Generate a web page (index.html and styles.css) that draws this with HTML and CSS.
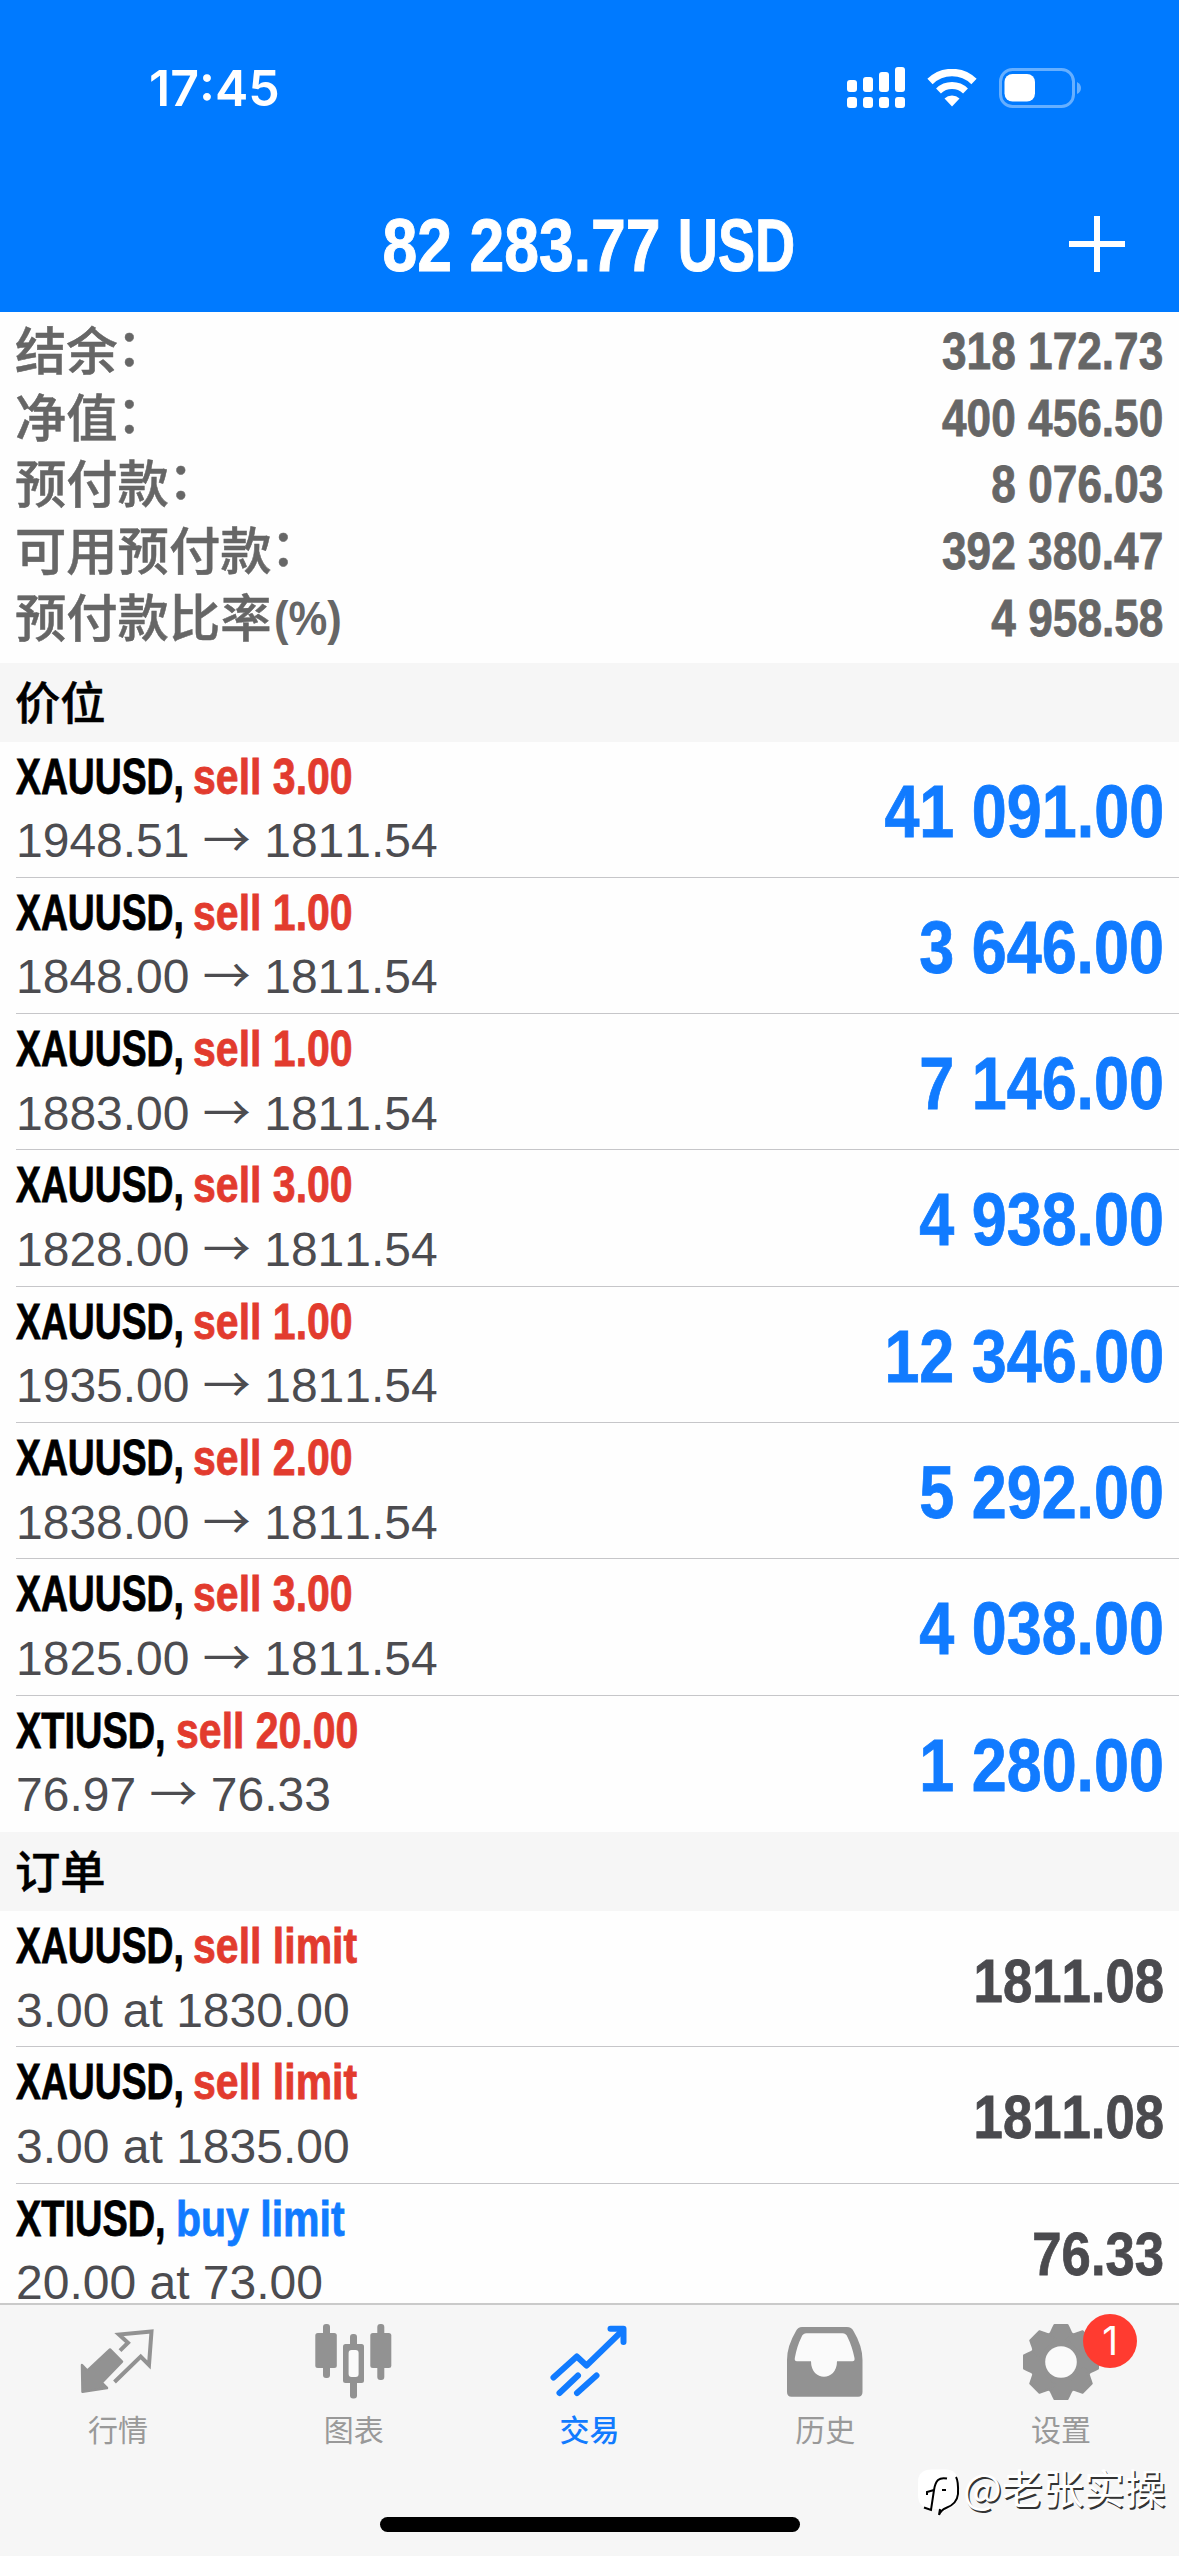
FILE: index.html
```html
<!DOCTYPE html>
<html lang="zh-CN">
<head>
    <meta charset="UTF-8">
    <meta name="viewport" content="width=device-width, initial-scale=1.0">
    <title>交易</title>
    <link rel="stylesheet" href="styles.css">
</head>
<body>
    <header>
        <div class="status-bar">
            <span class="time">17:45</span>
            <div class="status-icons">
                <svg class="signal" width="58" height="42" viewBox="0 0 58 42" fill="#fff">
                    <rect x="0" y="13" width="10" height="12" rx="3"/>
                    <rect x="16" y="10" width="10" height="15" rx="3"/>
                    <rect x="32" y="5" width="10" height="20" rx="3"/>
                    <rect x="48" y="0" width="10" height="25" rx="3"/>
                    <rect x="0" y="30" width="10" height="11" rx="3"/>
                    <rect x="16" y="30" width="10" height="11" rx="3"/>
                    <rect x="32" y="30" width="10" height="11" rx="3"/>
                    <rect x="48" y="30" width="10" height="11" rx="3"/>
                </svg>
                <svg class="wifi" width="50" height="38" viewBox="0 0 50 38">
                    <path d="M3 12.5A31.500 31.500 0 0 1 47 12.500" fill="none" stroke="#fff" stroke-width="7.500"/>
                    <path d="M11.500 22A19.500 19.500 0 0 1 38.500 22" fill="none" stroke="#fff" stroke-width="7"/>
                    <path d="M17.500 29.500A11 11 0 0 1 32.500 29.500L25 37.500Z" fill="#fff"/>
                </svg>
                <svg class="battery" width="83" height="40" viewBox="0 0 83 40">
                    <rect x="1.500" y="1.500" width="73" height="37" rx="12" fill="none" stroke="#66afff" stroke-width="3"/>
                    <rect x="5.500" y="6" width="30.500" height="27.500" rx="8" fill="#fff"/>
                    <path d="M78 14Q82 16 82 20Q82 24 78 26Z" fill="#66afff"/>
                </svg>
            </div>
        </div>
        <div class="nav-bar">
            <h1>82 283.77 <span>USD</span></h1>
            <svg class="add" width="56" height="56" viewBox="0 0 56 56">
                <path d="M28 0V56M0 28H56" stroke="#fff" stroke-width="6"/>
            </svg>
        </div>
    </header>

    <main>
        <div class="summary">
            <div class="summary-row"><span class="label">结余<i>：</i></span><span class="amount">318 172.73</span></div>
            <div class="summary-row"><span class="label">净值<i>：</i></span><span class="amount">400 456.50</span></div>
            <div class="summary-row"><span class="label">预付款<i>：</i></span><span class="amount">8 076.03</span></div>
            <div class="summary-row"><span class="label">可用预付款<i>：</i></span><span class="amount">392 380.47</span></div>
            <div class="summary-row"><span class="label">预付款比率<b>(%)</b></span><span class="amount">4 958.58</span></div>
        </div>

        <h2>价位</h2>
        <ul class="positions">
            <li>
                <div class="info">
                    <p class="name"><b>XAUUSD,</b> <span class="sell">sell 3.00</span></p>
                    <p class="detail">1948.51 <span class="arrow">→</span> 1811.54</p>
                </div>
                <span class="profit">41 091.00</span>
            </li>
            <li>
                <div class="info">
                    <p class="name"><b>XAUUSD,</b> <span class="sell">sell 1.00</span></p>
                    <p class="detail">1848.00 <span class="arrow">→</span> 1811.54</p>
                </div>
                <span class="profit">3 646.00</span>
            </li>
            <li>
                <div class="info">
                    <p class="name"><b>XAUUSD,</b> <span class="sell">sell 1.00</span></p>
                    <p class="detail">1883.00 <span class="arrow">→</span> 1811.54</p>
                </div>
                <span class="profit">7 146.00</span>
            </li>
            <li>
                <div class="info">
                    <p class="name"><b>XAUUSD,</b> <span class="sell">sell 3.00</span></p>
                    <p class="detail">1828.00 <span class="arrow">→</span> 1811.54</p>
                </div>
                <span class="profit">4 938.00</span>
            </li>
            <li>
                <div class="info">
                    <p class="name"><b>XAUUSD,</b> <span class="sell">sell 1.00</span></p>
                    <p class="detail">1935.00 <span class="arrow">→</span> 1811.54</p>
                </div>
                <span class="profit">12 346.00</span>
            </li>
            <li>
                <div class="info">
                    <p class="name"><b>XAUUSD,</b> <span class="sell">sell 2.00</span></p>
                    <p class="detail">1838.00 <span class="arrow">→</span> 1811.54</p>
                </div>
                <span class="profit">5 292.00</span>
            </li>
            <li>
                <div class="info">
                    <p class="name"><b>XAUUSD,</b> <span class="sell">sell 3.00</span></p>
                    <p class="detail">1825.00 <span class="arrow">→</span> 1811.54</p>
                </div>
                <span class="profit">4 038.00</span>
            </li>
            <li>
                <div class="info">
                    <p class="name oil"><b>XTIUSD,</b> <span class="sell">sell 20.00</span></p>
                    <p class="detail">76.97 <span class="arrow">→</span> 76.33</p>
                </div>
                <span class="profit">1 280.00</span>
            </li>
        </ul>

        <h2>订单</h2>
        <ul class="orders">
            <li>
                <div class="info">
                    <p class="name"><b>XAUUSD,</b> <span class="sell">sell limit</span></p>
                    <p class="detail">3.00 at 1830.00</p>
                </div>
                <span class="price">1811.08</span>
            </li>
            <li>
                <div class="info">
                    <p class="name"><b>XAUUSD,</b> <span class="sell">sell limit</span></p>
                    <p class="detail">3.00 at 1835.00</p>
                </div>
                <span class="price">1811.08</span>
            </li>
            <li>
                <div class="info">
                    <p class="name oil"><b>XTIUSD,</b> <span class="buy">buy limit</span></p>
                    <p class="detail">20.00 at 73.00</p>
                </div>
                <span class="price">76.33</span>
            </li>
        </ul>
    </main>

    <footer>
        <nav>
            <a class="tab">
                <svg width="80" height="80" viewBox="0 0 80 80">
                    <path d="M4 43L9.300 48.700L32 27.500L44 39.700L23.700 60.700L29 66L4.500 69.700Z" fill="#929292" stroke="#929292" stroke-width="2.500" stroke-linejoin="round"/>
                    <path d="M42 28.700L50 20.700L41 12.500L73.500 9.500L71 43L62.700 34.500L36.500 60" fill="none" stroke="#929292" stroke-width="4"/>
                </svg>
                <span>行情</span>
            </a>
            <a class="tab">
                <svg width="80" height="80" viewBox="0 0 80 80" fill="#929292">
                    <rect x="9" y="2" width="7" height="54" rx="3"/>
                    <rect x="1.300" y="11" width="21.500" height="35" rx="2.500"/>
                    <rect x="36" y="12" width="7" height="64.500" rx="3"/>
                    <rect x="29" y="22" width="21" height="39" rx="2.500"/>
                    <rect x="34.600" y="28" width="10" height="27" rx="3" fill="#fafafa"/>
                    <rect x="63.300" y="2" width="7" height="56" rx="3"/>
                    <rect x="56.300" y="11" width="21" height="35" rx="2.500"/>
                </svg>
                <span>图表</span>
            </a>
            <a class="tab active">
                <svg width="80" height="80" viewBox="0 0 80 80" fill="none" stroke="#117bff" stroke-width="6" stroke-linecap="round" stroke-linejoin="round">
                    <path d="M4.500 55.500L27.800 34.500L37.500 43.500L73 9"/>
                    <path d="M61.500 6.700H74.500V20"/>
                    <path d="M66 7H74V15Z" fill="#117bff" stroke="none"/>
                    <path d="M10.500 71L29 53.500M28 71L47.500 53.500"/>
                </svg>
                <span>交易</span>
            </a>
            <a class="tab">
                <svg width="80" height="80" viewBox="0 0 80 80">
                    <path d="M17 5H62Q66.500 5 68.500 9Q77.500 24 77.500 38V70Q77.500 74.700 73 74.700H6.500Q2 74.700 2 70V38Q2 24 11 9Q13 5 17 5Z" fill="#929292"/>
                    <path d="M21.500 11.300H57.500Q61 11.300 62.500 15Q67 24 69.500 36Q70 39.300 67.500 39.300H52C52 60 26 60 26 39.300H12Q9.300 39.300 9.800 36Q12 24 16.500 15Q18 11.300 21.500 11.300Z" fill="#fafafa"/>
                </svg>
                <span>历史</span>
            </a>
            <a class="tab">
                <svg width="80" height="80" viewBox="0 0 80 80" fill="#929292">
                    <circle cx="40" cy="40" r="29.500"/>
                    <g stroke="#929292" stroke-width="2" stroke-linejoin="round">
                        <path id="tooth" d="M28 13Q30 11 31.500 7L33.500 3H46.500L48.500 7Q50 11 52 13V20H28Z"/>
                        <use href="#tooth" transform="rotate(45 40 40)"/>
                        <use href="#tooth" transform="rotate(90 40 40)"/>
                        <use href="#tooth" transform="rotate(135 40 40)"/>
                        <use href="#tooth" transform="rotate(180 40 40)"/>
                        <use href="#tooth" transform="rotate(225 40 40)"/>
                        <use href="#tooth" transform="rotate(270 40 40)"/>
                        <use href="#tooth" transform="rotate(315 40 40)"/>
                    </g>
                    <circle cx="40" cy="40" r="15.800" fill="#fafafa"/>
                </svg>
                <span>设置</span>
                <em class="badge">1</em>
            </a>
        </nav>
        <div class="home-indicator"></div>
        <div class="watermark">
            <svg width="46" height="50" viewBox="0 0 46 50">
                <path d="M14 1.500H29Q41 2 41 14V27Q41 38 30 41L22 47L21 41H14Q1 40 1 27V14Q1 2 14 1.500Z" fill="#fff"/>
                <path d="M30 10.500C22 9 18.500 12 17 22L14 42L7 39.500M17 22L10 24V27M39 9Q41.500 13 41 26Q40 36 29 40Q24 42 22 47L23 41" fill="none" stroke="#000" stroke-width="2"/>
                <path d="M25 22H29" stroke="#000" stroke-width="2"/>
            </svg>
            <span>@老张实操</span>
        </div>
    </footer>
</body>
</html>
```
FILE: styles.css
```css
* {
    box-sizing: border-box;
}

body {
    font-family: 'Liberation Sans', 'Noto Sans CJK SC', sans-serif;
    font-kerning: none;
    margin: 0;
    height: 2556px;
    display: flex;
    flex-direction: column;
    overflow: hidden;
    background: #fefefe;
    color: #000;
}

h1, h2, p, ul {
    margin: 0;
    padding: 0;
}

header {
    height: 312px;
    flex: none;
    background: #007aff;
    color: #fff;
}

.status-bar {
    height: 176px;
    padding: 0 97px 0 149px;
    display: flex;
    justify-content: space-between;
    align-items: center;
}

.time {
    font-family: 'Inter', sans-serif;
    font-size: 50px;
    font-weight: 600;
}

.status-icons {
    display: flex;
    align-items: center;
}

.wifi {
    margin: 0 22px 0 22px;
}

.nav-bar {
    height: 136px;
    padding: 0 54px;
    display: grid;
    grid-template-columns: 56px 1fr 56px;
    align-items: center;
}

.nav-bar h1 {
    grid-column: 2;
    padding: 4px 0 0 16px;
    font-size: 74px;
    line-height: 90px;
    text-align: center;
    transform: scaleX(0.845);
    white-space: nowrap;
    -webkit-text-stroke: 1px #fff;
}

.nav-bar h1 span {
    display: inline-block;
    transform: scaleX(0.89);
    transform-origin: left;
}

main {
    flex: 1;
    min-height: 0;
}

.summary {
    height: 350.5px;
    padding: 6px 16px 0 15px;
    color: #666;
}

.summary-row {
    height: 66.7px;
    display: flex;
    justify-content: space-between;
    line-height: 66.7px;
}

.label {
    font-family: 'Noto Sans CJK SC', sans-serif;
    font-size: 51.3px;
    font-weight: 500;
    margin-top: -3px;
    -webkit-text-stroke: 0.5px currentColor;
}

.label i {
    display: inline-block;
    font-style: normal;
    transform: translate(-1px, -4px);
}

.label b {
    display: inline-block;
    font-family: 'Liberation Sans', sans-serif;
    font-size: 49px;
    font-weight: bold;
    transform: translate(2px, -2px) scaleX(0.89);
    transform-origin: left;
    -webkit-text-stroke: 0;
}

/* condensed bold numbers, pinned to the right edge */
.amount,
.profit,
.price {
    font-weight: bold;
    transform: scaleX(0.85);
    transform-origin: right;
    -webkit-text-stroke: 0.8px currentColor;
}

.amount {
    font-size: 52px;
}

h2 {
    height: 79px;
    padding-left: 15px;
    background: #f6f6f6;
    font-family: 'Noto Sans CJK SC', sans-serif;
    font-size: 45.3px;
    font-weight: 500;
    line-height: 74px;
    -webkit-text-stroke: 0.5px currentColor;
}

ul {
    list-style: none;
}

li {
    height: 136.33px;
    margin-left: 16px;
    padding-right: 15px;
    border-bottom: 1px solid #c6c6c9;
    display: flex;
    justify-content: space-between;
}

.positions li:last-child {
    border-bottom: none;
}

.name {
    padding-top: 2px;
    font-size: 50px;
    font-weight: bold;
    line-height: 67.5px;
    transform: scaleX(0.82);
    transform-origin: left;
    white-space: nowrap;
    -webkit-text-stroke: 0.8px currentColor;
}

.name b {
    display: inline-block;
    margin-right: -23px;
    transform: scaleX(0.91);
    transform-origin: left;
}

.name.oil b {
    margin-right: -16px;
    transform: scaleX(0.925);
}

.sell {
    color: #e23b2e;
}

.buy {
    color: #117bff;
}

.detail {
    font-size: 48px;
    line-height: 59px;
    color: #4c4c50;
    white-space: nowrap;
}

.arrow {
    font-family: 'Noto Sans CJK SC', sans-serif;
    line-height: 1;
}

.profit {
    font-size: 74px;
    line-height: 139px;
    color: #117bff;
}

.price {
    font-size: 62px;
    line-height: 140px;
    color: #4a4a4e;
}

footer {
    position: relative;
    height: 253px;
    flex: none;
    border-top: 2px solid #cacaca;
    background: #f6f6f6;
}

nav {
    height: 212px;
    padding-top: 17px;
    display: grid;
    grid-template-columns: repeat(5, 1fr);
}

.tab {
    position: relative;
    display: flex;
    flex-direction: column;
    align-items: center;
    color: #999;
    font-family: 'Noto Sans CJK SC', sans-serif;
    font-size: 30px;
    line-height: 44px;
}

.tab span {
    margin-top: 4px;
}

.tab.active {
    color: #117bff;
    font-weight: 500;
}

.badge {
    position: absolute;
    left: 140px;
    top: -8px;
    width: 54px;
    height: 54px;
    border-radius: 50%;
    background: #ff3b30;
    color: #fff;
    font-family: 'Inter', sans-serif;
    font-size: 39px;
    font-style: normal;
    line-height: 53px;
    text-align: center;
}

.home-indicator {
    width: 420px;
    height: 15px;
    margin: 0 auto;
    border-radius: 8px;
    background: #000;
}

.watermark {
    position: absolute;
    left: 917px;
    top: 163px;
    display: flex;
    align-items: flex-start;
    color: #fff;
    font-family: 'Noto Sans CJK SC', sans-serif;
    font-size: 41px;
    line-height: 36px;
    text-shadow: 1.5px 1.5px 0 #333;
}
```
